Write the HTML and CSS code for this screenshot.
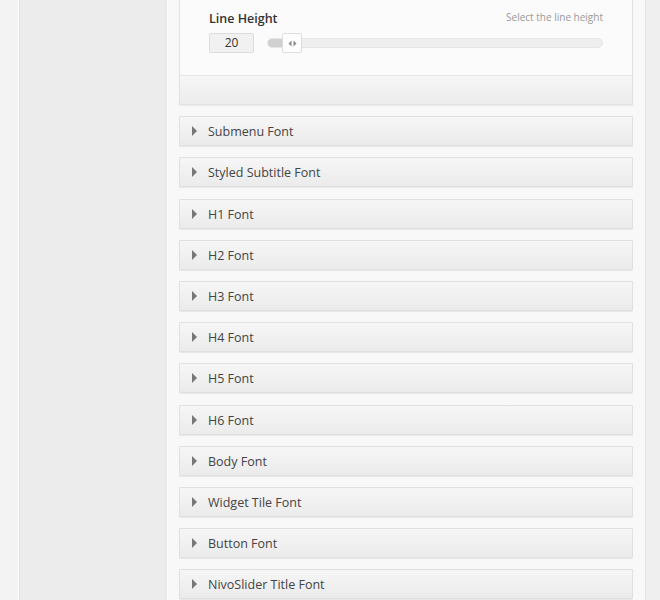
FILE: index.html
```html
<!DOCTYPE html>
<html lang="en">
<head>
<meta charset="utf-8">
<title>Typography Options</title>
<link rel="stylesheet" href="styles.css">
</head>
<body>
<div class="frame">
  <div class="gutter"></div>
  <aside class="sidebar"></aside>
  <main class="main">
    <section class="panel">
      <div class="panel-body">
        <div class="field-head">
          <h3 class="field-title">Line Height</h3>
          <span class="field-desc">Select the line height</span>
        </div>
        <div class="field-control">
          <div class="num-box">20</div>
          <div class="slider">
            <div class="slider-fill"></div>
            <div class="slider-handle">
              <svg width="9" height="7" viewBox="0 0 9 7"><path d="M3.5 0.5 L0.5 3.5 L3.5 6.5 Z M5.5 0.5 L8.5 3.5 L5.5 6.5 Z" fill="#8a8a8a"/></svg>
            </div>
          </div>
        </div>
      </div>
      <div class="panel-foot"></div>
    </section>

    <div class="section">Submenu Font</div>
    <div class="section">Styled Subtitle Font</div>
    <div class="section">H1 Font</div>
    <div class="section">H2 Font</div>
    <div class="section">H3 Font</div>
    <div class="section">H4 Font</div>
    <div class="section">H5 Font</div>
    <div class="section">H6 Font</div>
    <div class="section">Body Font</div>
    <div class="section">Widget Tile Font</div>
    <div class="section">Button Font</div>
    <div class="section">NivoSlider Title Font</div>
  </main>
  <div class="edge"></div>
</div>
</body>
</html>
```

FILE: styles.css
```css
html, body {
  margin: 0;
  padding: 0;
  height: 100%;
  overflow: hidden;
}

body {
  font-family: "Open Sans", "Liberation Sans", sans-serif;
  color: #444;
  background: #f4f4f4;
}

.frame {
  display: flex;
  height: 600px;
  align-items: stretch;
}

.gutter {
  width: 18px;
  background: #f3f3f3;
  border-right: 1px solid #fbfbfb;
}

.sidebar {
  width: 146px;
  background: #ececec;
  border-left: 1px solid #e2e2e2;
  border-right: 1px solid #e4e4e4;
}

.main {
  width: 454px;
  padding: 0 12px 0 11px;
  background: #f8f8f8;
  border-left: 1px solid #fdfdfd;
  border-right: 1px solid #e4e4e4;
  display: flex;
  flex-direction: column;
  gap: 11.2px;
}

.edge {
  flex: 1;
  background: #efefef;
}

/* open option panel */
.panel {
  flex: none;
  border: 1px solid #e2e2e2;
  border-top: none;
  background: #fbfbfb;
  box-shadow: 0 1px 1px rgba(0, 0, 0, 0.05);
}

.panel-body {
  height: 76px;
  padding: 10px 29px 0 29px;
  box-sizing: border-box;
  border-bottom: 1px solid #e6e6e6;
}

.field-head {
  display: flex;
  justify-content: space-between;
  align-items: baseline;
}

.field-title {
  margin: 0;
  font-size: 12.5px;
  font-weight: 600;
  color: #333;
}

.field-desc {
  font-size: 10px;
  color: #999;
  position: relative;
  top: -2px;
}

.field-control {
  display: flex;
  align-items: center;
  margin-top: 6px;
  gap: 13px;
}

.num-box {
  width: 45px;
  height: 20px;
  box-sizing: border-box;
  border: 1px solid #dcdcdc;
  border-radius: 2px;
  background: #f1f1f1;
  font-size: 12px;
  line-height: 18px;
  text-align: center;
  color: #333;
}

.slider {
  position: relative;
  flex: 1;
  height: 10px;
  box-sizing: border-box;
  border: 1px solid #e6e6e6;
  border-radius: 5px;
  background: #eeeeee;
}

.slider-fill {
  width: 18px;
  height: 100%;
  border-radius: 5px 0 0 5px;
  background: #d0d0d0;
}

.slider-handle {
  position: absolute;
  left: 14px;
  top: -6px;
  width: 20px;
  height: 20px;
  box-sizing: border-box;
  border: 1px solid #dedede;
  border-radius: 2px;
  background: #fdfdfd;
  display: flex;
  align-items: center;
  justify-content: center;
}

.panel-foot {
  height: 28px;
  background: linear-gradient(#f6f6f6, #ececec);
}

/* collapsed option sections */
.section {
  flex: none;
  height: 30px;
  box-sizing: border-box;
  border: 1px solid #e0e0e0;
  border-radius: 1px;
  background: linear-gradient(#f6f6f6, #ebebeb);
  box-shadow: 0 1px 1px rgba(0, 0, 0, 0.07);
  padding-left: 28px;
  position: relative;
  font-size: 12.5px;
  line-height: 30px;
  color: #444;
}

.section::before {
  content: "";
  position: absolute;
  left: 12px;
  top: 9px;
  border-style: solid;
  border-width: 5px 0 5px 5px;
  border-color: transparent transparent transparent #777;
}
```
